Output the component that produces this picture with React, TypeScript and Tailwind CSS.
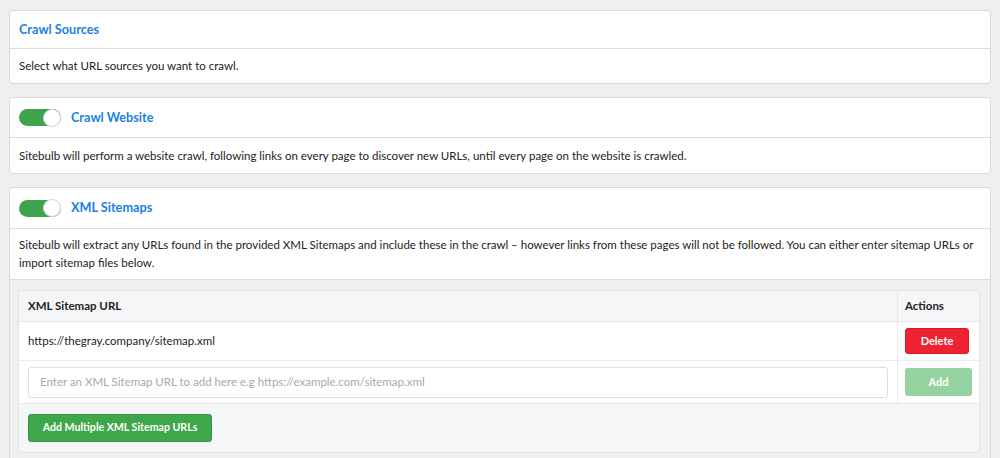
import React from "react";

function Toggle() {
  return (
    <div className="relative w-[42px] h-[17px] rounded-full bg-[#3fa34d] shrink-0">
      <div className="absolute right-0 top-[-0.5px] w-[18px] h-[18px] rounded-full bg-white border border-[#d8d8d8]" />
    </div>
  );
}

export default function App() {
  return (
    <div
      className="min-h-screen bg-[#efefef] px-[9px] pt-[10px] text-[11.5px] text-[#222]"
      style={{ fontFamily: "Lato, 'Open Sans', sans-serif" }}
    >
      {/* Card 1 */}
      <div className="bg-white border border-[#d9d9d9] rounded-[4px] mb-[13px]">
        <div className="h-[38px] px-[9px] flex items-center border-b border-[#dcdcdc]">
          <span className="text-[12.7px] font-bold text-[#1b7fe3]">Crawl Sources</span>
        </div>
        <div className="h-[34px] px-[9px] flex items-center">
          Select what URL sources you want to crawl.
        </div>
      </div>

      {/* Card 2 */}
      <div className="bg-white border border-[#d9d9d9] rounded-[4px] mb-[13px]">
        <div className="h-[40px] px-[9px] flex items-center gap-[10px] border-b border-[#dcdcdc]">
          <Toggle />
          <span className="text-[12.7px] font-bold text-[#1b7fe3]">Crawl Website</span>
        </div>
        <div className="h-[35px] px-[9px] flex items-center">
          Sitebulb will perform a website crawl, following links on every page to discover new URLs, until every page on the website is crawled.
        </div>
      </div>

      {/* Card 3 */}
      <div className="bg-white border border-[#d9d9d9] rounded-t-[4px] border-b-0">
        <div className="h-[41px] px-[9px] flex items-center gap-[10px] border-b border-[#dcdcdc]">
          <Toggle />
          <span className="text-[12.7px] font-bold text-[#1b7fe3]">XML Sitemaps</span>
        </div>
        <div className="px-[9px] pt-[7px] pb-[7px] leading-[18px] border-b border-[#dcdcdc]">
          Sitebulb will extract any URLs found in the provided XML Sitemaps and include these in the crawl – however links from these pages will not be followed. You can either enter sitemap URLs or import sitemap files below.
        </div>
        <div className="bg-[#f0f0f0] pt-[10px] pl-[8px] pr-[10px] pb-[6px]">
          <div className="bg-[#f5f6f7] border border-[#e3e3e3] rounded-[4px]">
            <div className="flex h-[31px] border-b border-[#e6e6e6]">
              <div className="flex-1 flex items-center px-[9px] font-bold">XML Sitemap URL</div>
              <div className="w-[82px] border-l border-[#e6e6e6] flex items-center px-[7px] font-bold">Actions</div>
            </div>
            <div className="flex h-[39px] bg-white border-b border-[#ececec]">
              <div className="flex-1 flex items-center px-[9px]">https://thegray.company/sitemap.xml</div>
              <div className="w-[82px] border-l border-[#ececec] flex items-center px-[7px]">
                <button className="w-[64px] h-[26px] rounded-[3px] bg-[#ef2232] border border-[#d81a29] text-white text-[11px] font-bold">
                  Delete
                </button>
              </div>
            </div>
            <div className="flex h-[43px] bg-white border-b border-[#e6e6e6]">
              <div className="flex-1 flex items-center px-[9px]">
                <div className="w-full h-[31px] border border-[#dedede] rounded-[3px] flex items-center px-[11px] text-[#a9a9a9]">
                  Enter an XML Sitemap URL to add here e.g https://example.com/sitemap.xml
                </div>
              </div>
              <div className="w-[82px] border-l border-[#ececec] flex items-center px-[7px]">
                <button className="w-[67px] h-[28px] rounded-[3px] bg-[#95d3a1] text-white text-[11px] font-bold">
                  Add
                </button>
              </div>
            </div>
            <div className="h-[48px] flex items-center px-[9px]">
              <button className="w-[184px] h-[28px] rounded-[3px] bg-[#3ea74b] border border-[#34963f] text-white text-[10.6px] font-bold">
                Add Multiple XML Sitemap URLs
              </button>
            </div>
          </div>
        </div>
      </div>
    </div>
  );
}
